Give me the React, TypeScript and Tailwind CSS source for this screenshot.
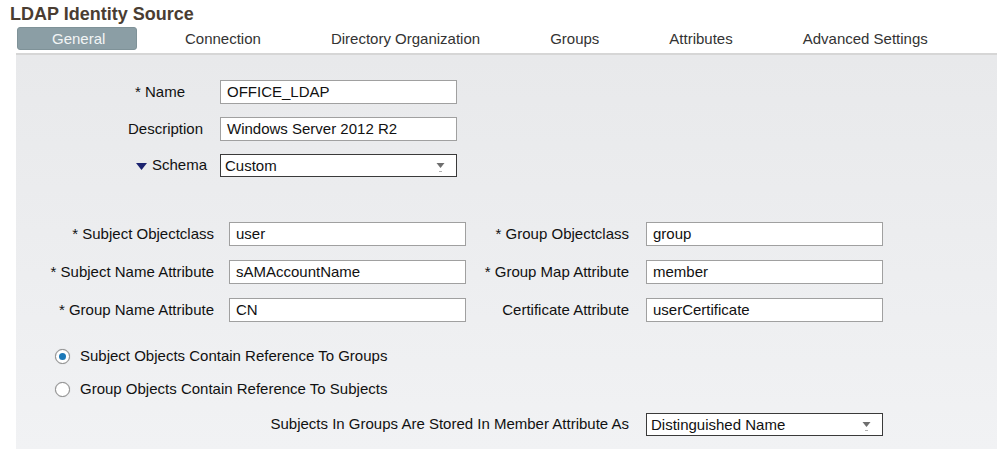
import React from 'react';

const tabs = ['Connection', 'Directory Organization', 'Groups', 'Attributes', 'Advanced Settings'];

function TextBox({ value }: { value: string }) {
  return (
    <div className="flex h-[24px] w-[237px] items-center border border-[#a0a0a0] bg-white pl-[6px] text-[15px] text-[#111]">
      {value}
    </div>
  );
}

function SelectBox({ value }: { value: string }) {
  return (
    <div className="flex h-[23px] w-[237px] items-center justify-between border border-[#3a3a3a] bg-white pl-[4px] pr-[11px] text-[15px] text-[#111]">
      <span className="pt-[2px]">{value}</span>
      <svg width="9" height="14" viewBox="0 0 9 14">
        <path d="M0.5 4 L8.5 4 L4.5 9 Z" fill="#6e6e6e" />
        <rect x="3" y="12" width="3" height="1" fill="#b0b0b0" />
      </svg>
    </div>
  );
}

function Radio({ checked, label }: { checked?: boolean; label: string }) {
  return (
    <div className="flex h-[20px] items-center pl-[39px] text-[15px] text-[#111]">
      <span className="flex h-[15px] w-[15px] items-center justify-center rounded-full border border-[#8a8a8a] bg-white shadow-[0_0_1px_rgba(0,0,0,0.25)]">
        {checked && <span className="h-[7px] w-[7px] rounded-full bg-[#1b78b8]" />}
      </span>
      <span className="ml-[10px]">{label}</span>
    </div>
  );
}

export default function App() {
  return (
    <div className="h-[449px] w-[998px] overflow-hidden bg-white font-['Liberation_Sans',Arial,sans-serif]">
      <div className="h-[27px] pl-[10px] pt-[3px] text-[18px] font-bold leading-[22px] text-[#4a3d32]">
        LDAP Identity Source
      </div>

      <div className="flex h-[23px] items-center pl-[17px] text-[15px] text-[#333]">
        <div className="h-[23px] w-[120px] rounded-[3px] border border-[#7f9298] bg-[#8b9ea5] pl-[34px] leading-[21px] text-[#f2f5f5]">
          General
        </div>
        <div className="ml-[13px] flex">
          {tabs.map((t) => (
            <div key={t} className="px-[35px] leading-[21px]">
              {t}
            </div>
          ))}
        </div>
      </div>

      <div className="ml-[16px] mr-[1px] mt-[3px] h-[396px] border-t-2 border-[#d6d6d6] bg-gradient-to-b from-[#e8e9eb] to-[#f1f2f4] text-[15px] text-[#111]">
        <div className="flex flex-col gap-[13px] pt-[25px]">
          <div className="flex items-center">
            <div className="w-[204px] pr-[35px] text-right">* Name</div>
            <TextBox value="OFFICE_LDAP" />
          </div>
          <div className="flex items-center">
            <div className="w-[204px] pr-[17px] text-right">Description</div>
            <TextBox value="Windows Server 2012 R2" />
          </div>
          <div className="flex items-center">
            <div className="flex w-[204px] items-center justify-end pr-[13px]">
              <svg width="11" height="7" viewBox="0 0 11 7" className="mr-[5px] mt-[1px]">
                <path d="M0 0 L11 0 L5.5 7 Z" fill="#1c2470" />
              </svg>
              Schema
            </div>
            <SelectBox value="Custom" />
          </div>
        </div>

        <div className="mt-[45px] flex flex-col gap-[14px]">
          {[
            ['* Subject Objectclass', 'user', '* Group Objectclass', 'group'],
            ['* Subject Name Attribute', 'sAMAccountName', '* Group Map Attribute', 'member'],
            ['* Group Name Attribute', 'CN', 'Certificate Attribute', 'userCertificate'],
          ].map(([l1, v1, l2, v2]) => (
            <div key={l1} className="flex items-center">
              <div className="w-[213px] pr-[15px] text-right">{l1}</div>
              <TextBox value={v1} />
              <div className="w-[180px] pr-[17px] text-right">{l2}</div>
              <TextBox value={v2} />
            </div>
          ))}
        </div>

        <div className="mt-[24px] flex flex-col gap-[13px]">
          <Radio checked label="Subject Objects Contain Reference To Groups" />
          <Radio label="Group Objects Contain Reference To Subjects" />
        </div>

        <div className="mt-[14px] flex items-center">
          <div className="w-[630px] pr-[17px] text-right">Subjects In Groups Are Stored In Member Attribute As</div>
          <SelectBox value="Distinguished Name" />
        </div>
      </div>
    </div>
  );
}
